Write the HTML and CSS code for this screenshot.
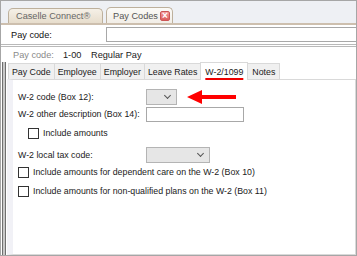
FILE: index.html
```html
<!DOCTYPE html>
<html lang="en">
<head>
    <meta charset="UTF-8">
    <title>Pay Codes</title>
    <link rel="stylesheet" href="styles.css">
</head>
<body>
    <div class="window">
        <!-- Document tabs -->
        <div class="doc-tabs">
            <div class="doc-tab">Caselle Connect&reg;</div>
            <div class="doc-tab active">Pay Codes <span class="close">&times;</span></div>
        </div>

        <div class="lookup-row">
            <span class="lookup-label">Pay code:</span>
            <div class="lookup-input"></div>
        </div>
        <div class="double-rule"></div>

        <div class="info-row">
            <span class="info-label">Pay code:</span>
            <span class="info-code">1-00</span>
            <span>Regular Pay</span>
        </div>

        <div class="body">
            <div class="side-rail"></div>
            <div class="editor">
                <div class="page-tabs">
                    <div class="page-tab">Pay Code</div>
                    <div class="page-tab">Employee</div>
                    <div class="page-tab">Employer</div>
                    <div class="page-tab">Leave Rates</div>
                    <div class="page-tab selected">W-2/1099</div>
                    <div class="page-tab">Notes</div>
                </div>

                <div class="panel">
                    <div class="field">
                        <span class="field-label">W-2 code (Box 12):</span>
                        <div class="combo small"><span class="chev"></span></div>
                        <svg class="arrow" width="50" height="14" viewBox="0 0 50 14">
                            <polygon points="0,7 15,0 15,5 49,5 49,9 15,9 15,14" fill="#f00"/>
                        </svg>
                    </div>
                    <div class="field desc">
                        <span class="field-label">W-2 other description (Box 14):</span>
                        <div class="textbox"></div>
                    </div>
                    <label class="check indent"><span class="box"></span>Include amounts</label>
                    <div class="field local">
                        <span class="field-label">W-2 local tax code:</span>
                        <div class="combo wide"><span class="chev"></span></div>
                    </div>
                    <label class="check dep"><span class="box"></span>Include amounts for dependent care on the W-2 (Box 10)</label>
                    <label class="check"><span class="box"></span>Include amounts for non-qualified plans on the W-2 (Box 11)</label>
                </div>
            </div>
        </div>
    </div>
</body>
</html>
```

FILE: styles.css
```css
body {
    margin: 0;
    font-family: 'Liberation Sans', Arial, sans-serif;
    font-size: 8.8px;
    color: #1a1a1a;
    background: #fff;
    white-space: nowrap;
}

.window {
    width: 357px;
    height: 256px;
    box-sizing: border-box;
    border: 1px solid #a6a6a6;
    display: flex;
    flex-direction: column;
    overflow: hidden;
}

/* Document tabs */
.doc-tabs {
    height: 24px;
    box-sizing: border-box;
    display: flex;
    align-items: flex-end;
    gap: 3px;
    padding-left: 7px;
    background: #eef0f4;
    border-bottom: 2px solid #cdbfae;
}

.doc-tab {
    height: 15px;
    box-sizing: border-box;
    padding: 0 0 0 7px;
    width: 95px;
    display: flex;
    align-items: center;
    font-size: 9.2px;
    color: #666;
    border: 1px solid #bdb09c;
    border-bottom: none;
    border-radius: 5px 5px 0 0;
    background: linear-gradient(#f5f0e7, #e7ddcc);
}

.doc-tab.active {
    width: 67px;
    height: 16px;
    padding-left: 6px;
    color: #555;
    background: linear-gradient(#fbfaf7, #f2eee7);
}

.close {
    margin-left: auto;
    margin-right: 2px;
    width: 10px;
    height: 10px;
    box-sizing: border-box;
    display: flex;
    align-items: center;
    justify-content: center;
    font-size: 10px;
    line-height: 1;
    color: #fff;
    font-weight: bold;
    border: 1px solid #c55;
    border-radius: 2px;
    background: linear-gradient(#f3a0a0, #dc5c5c);
}

.lookup-row {
    height: 19px;
    display: flex;
    align-items: center;
    padding-left: 10px;
}

.lookup-label {
    width: 95px;
    font-size: 9.2px;
    color: #111;
}

.lookup-input {
    flex: 1;
    height: 15px;
    box-sizing: border-box;
    border: 1px solid #a8a8a8;
    border-right: none;
}

.double-rule {
    height: 1px;
    border-top: 1px solid #b9b9b9;
    border-bottom: 1px solid #b9b9b9;
}

.info-row {
    height: 15px;
    display: flex;
    align-items: center;
    padding-left: 12px;
    font-size: 9.2px;
}

.info-label {
    color: #8a8a8a;
    width: 50px;
}

.info-code {
    width: 28px;
}

.body {
    flex: 1;
    display: flex;
}

.side-rail {
    width: 2px;
    margin-left: 1px;
    border-left: 1px solid #6f6f6f;
    border-right: 1px solid #6f6f6f;
    background: #c8c8c8;
}

.editor {
    flex: 1;
    display: flex;
    flex-direction: column;
    margin-left: 1px;
}

.page-tabs {
    height: 17px;
    display: flex;
    align-items: flex-end;
    padding-left: 1px;
}

.page-tab {
    height: 16px;
    box-sizing: border-box;
    padding: 0 3px;
    display: flex;
    align-items: center;
    color: #1a1a1a;
    background: #f0f0f0;
    border: 1px solid #d9d9d9;
    border-bottom: none;
    margin-right: -1px;
}

.page-tab:last-child {
    padding: 0 4px;
}

.page-tab.selected {
    height: 18px;
    padding: 0 4px;
    background: #fff;
    position: relative;
    top: 1px;
    z-index: 1;
    text-decoration: underline;
    text-decoration-color: #e00;
    text-decoration-thickness: 2px;
    text-underline-offset: 3px;
}

.panel {
    flex: 1;
    border: 1px solid #d9d9d9;
    border-left: 6px solid #f1f1f6;
    padding: 9px 0 0 5px;
    display: flex;
    flex-direction: column;
}

.field {
    display: flex;
    align-items: center;
    height: 16px;
}

.field.desc { margin-top: 1px; }
.field.local { margin-top: 6px; }

.field-label {
    width: 128px;
}

.combo {
    height: 16px;
    box-sizing: border-box;
    border: 1px solid #b4b4b4;
    background: #e6e6e6;
    display: flex;
    align-items: center;
    justify-content: flex-end;
    padding-right: 6px;
}

.combo.small { width: 31px; }
.combo.wide { width: 64px; }

.chev {
    width: 4px;
    height: 4px;
    border-right: 1px solid #555;
    border-bottom: 1px solid #555;
    transform: rotate(45deg);
    margin-top: -3px;
}

.arrow {
    margin-left: 10px;
}

.textbox {
    width: 98px;
    height: 15px;
    box-sizing: border-box;
    border: 1px solid #a8a8a8;
}

.check {
    display: flex;
    align-items: center;
    gap: 4px;
    height: 16px;
    margin-top: 3px;
}

.check.indent {
    padding-left: 10px;
}

.check.dep {
    margin-top: 1px;
}

.box {
    width: 11px;
    height: 11px;
    box-sizing: border-box;
    border: 1px solid #333;
    background: #fff;
}
```
